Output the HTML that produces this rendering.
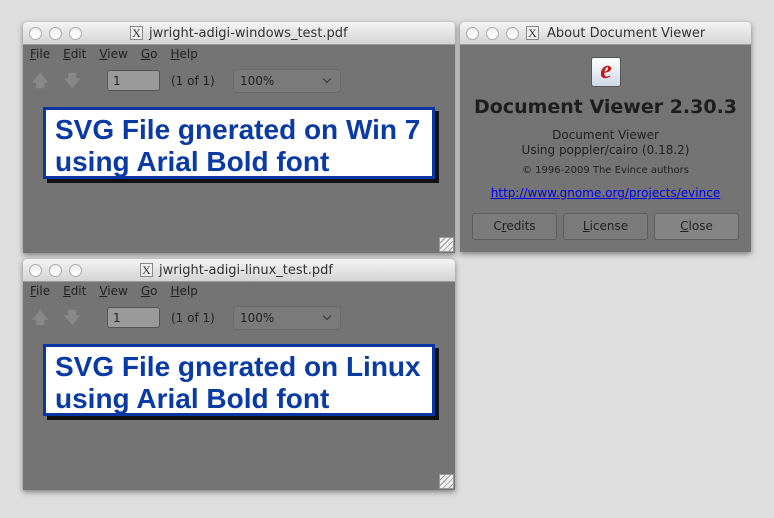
<!DOCTYPE html><html><head><style>
body{margin:0;width:774px;height:518px;background:#dedede;font-family:"DejaVu Sans","Liberation Sans",sans-serif;position:relative;overflow:hidden}
.win{position:absolute;background:#747474;box-shadow:0 2px 6px rgba(0,0,0,.45);border-radius:4px 4px 0 0;overflow:hidden}
.tb{height:22px;background:linear-gradient(#f4f4f4,#d4d4d4);border-bottom:1px solid #999;position:relative;font-size:13px;color:#333}
.dot{position:absolute;top:5px;width:11px;height:11px;border-radius:50%;border:1px solid #aaa;background:linear-gradient(#eee,#fff)}
.xi{position:absolute;top:4px;width:11px;height:12px;border:1px solid #888;background:#eee;font:12px "Liberation Serif",serif;line-height:12px;text-align:center;color:#333}
.tt{position:absolute;top:4px}
.menu{position:absolute;top:25px;left:7px;font-size:12px;color:#222}
.menu span{margin-right:13px}
.arr{position:absolute;color:#888;font-size:16px;font-weight:bold}
.inp{position:absolute;width:53px;height:21px;border:1px solid #555;background:#9a9a9a;border-radius:3px;font-size:12px;color:#222;box-sizing:border-box;padding:3px 5px}
.of{position:absolute;font-size:12px;color:#222}
.sel{position:absolute;width:108px;height:24px;border:1px solid #6a6a6a;background:#7a7a7a;border-radius:4px;font-size:12px;color:#222;box-sizing:border-box;padding:4px 6px}
.sel:after{content:"";position:absolute;right:10px;top:6px;width:5px;height:5px;border-right:1.5px solid #333;border-bottom:1.5px solid #333;transform:rotate(45deg)}
.page{position:absolute;left:20px;width:377px;height:62px;background:#fff;border:3px solid #0a36a4;box-shadow:4px 4px 0 #111;font:bold 28px/32px "Liberation Sans",Arial,sans-serif;color:#0a3aa3;padding:4px 0 0 9px;box-sizing:content-box;white-space:nowrap}
.grip{position:absolute;right:1px;bottom:1px;width:13px;height:13px;background:repeating-linear-gradient(135deg,#eee 0 3px,#999 3px 4px);border:1px solid #999}
.btn{position:absolute;top:191px;width:83px;height:25px;border:1px solid #5e5e5e;border-radius:3px;background:#7b7b7b;font-size:12px;color:#222;text-align:center;line-height:25px}
</style></head><body>

<div class="win" style="left:23px;top:22px;width:432px;height:231px">
<div class="tb"><div class="dot" style="left:6px"></div><div class="dot" style="left:26px"></div><div class="dot" style="left:46px"></div><div class="xi" style="left:107px">X</div><div class="tt" style="left:126px">jwright-adigi-windows_test.pdf</div></div>
<div class="menu"><span><u>F</u>ile</span><span><u>E</u>dit</span><span><u>V</u>iew</span><span><u>G</u>o</span><span><u>H</u>elp</span></div>
<div class="arr" style="left:9px;top:48px">🡅</div><div class="arr" style="left:41px;top:48px">🡇</div>
<div class="inp" style="left:84px;top:48px">1</div><div class="of" style="left:148px;top:52px">(1 of 1)</div>
<div class="sel" style="left:210px;top:47px">100%</div>
<div class="page" style="top:85px">SVG File gnerated on Win 7<br>using Arial Bold font</div>
<div class="grip"></div>
</div>

<div class="win" style="left:23px;top:259px;width:432px;height:231px">
<div class="tb"><div class="dot" style="left:6px"></div><div class="dot" style="left:26px"></div><div class="dot" style="left:46px"></div><div class="xi" style="left:117px">X</div><div class="tt" style="left:136px">jwright-adigi-linux_test.pdf</div></div>
<div class="menu"><span><u>F</u>ile</span><span><u>E</u>dit</span><span><u>V</u>iew</span><span><u>G</u>o</span><span><u>H</u>elp</span></div>
<div class="arr" style="left:9px;top:48px">🡅</div><div class="arr" style="left:41px;top:48px">🡇</div>
<div class="inp" style="left:84px;top:48px">1</div><div class="of" style="left:148px;top:52px">(1 of 1)</div>
<div class="sel" style="left:210px;top:47px">100%</div>
<div class="page" style="top:85px">SVG File gnerated on Linux<br>using Arial Bold font</div>
<div class="grip"></div>
</div>

<div class="win" style="left:460px;top:22px;width:291px;height:230px">
<div class="tb"><div class="dot" style="left:6px"></div><div class="dot" style="left:26px"></div><div class="dot" style="left:46px"></div><div class="xi" style="left:66px">X</div><div class="tt" style="left:87px">About Document Viewer</div></div>
<div style="position:absolute;left:131px;top:35px;width:28px;height:28px;border-radius:3px;background:linear-gradient(#fff,#cfd8e6);border:1px solid #555;font:italic bold 26px/24px 'Liberation Serif',serif;color:#c01818;text-align:center">e</div>
<div style="position:absolute;left:0;width:291px;top:74px;text-align:center;font-weight:bold;font-size:19px;color:#1e1e1e">Document Viewer 2.30.3</div>
<div style="position:absolute;left:0;width:291px;top:106px;text-align:center;font-size:12px;line-height:15px;color:#222">Document Viewer<br>Using poppler/cairo (0.18.2)</div>
<div style="position:absolute;left:0;width:291px;top:143px;text-align:center;font-size:10px;color:#222">© 1996-2009 The Evince authors</div>
<div style="position:absolute;left:0;width:291px;top:164px;text-align:center;font-size:12px;color:#0000ee;text-decoration:underline">http://www.gnome.org/projects/evince</div>
<div class="btn" style="left:12px">C<u>r</u>edits</div><div class="btn" style="left:103px"><u>L</u>icense</div><div class="btn" style="left:194px;background:#848484"><u>C</u>lose</div>
</div>
</body></html>
